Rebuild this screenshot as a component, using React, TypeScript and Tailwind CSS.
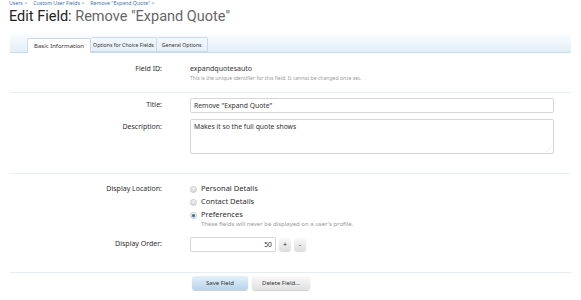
import React from "react";

const Label = ({ children }: { children: React.ReactNode }) => (
  <div className="w-[152px] shrink-0 text-right text-[7px] text-[#2d2d2d]">{children}</div>
);

function Radio({ label, checked }: { label: string; checked?: boolean }) {
  return (
    <div className="flex items-center gap-[4px] h-[12px]">
      <span className="w-[7px] h-[7px] rounded-full border border-[#c8c8c8] bg-gradient-to-b from-[#f6f6f6] to-[#d8d8d8] flex items-center justify-center">
        {checked && <span className="w-[3px] h-[3px] rounded-full bg-[#2f6a9a]" />}
      </span>
      <span className="text-[7.5px] text-[#2d2d2d]">{label}</span>
    </div>
  );
}

export default function App() {
  return (
    <div className="w-[581px] h-[300px] overflow-hidden bg-white text-[#333]" style={{ fontFamily: '"Noto Sans", "DejaVu Sans", sans-serif' }}>
      {/* Breadcrumb */}
      <div className="pl-[9px] h-[6px] text-[5.2px] leading-[6px] text-[#3b73af] whitespace-nowrap flex gap-[6px]">
        <span>Users &gt;</span>
        <span>Custom User Fields &gt;</span>
        <span>Remove "Expand Quote" &gt;</span>
      </div>

      {/* Heading */}
      <h1 className="pl-[9px] h-[22px] text-[14.5px] leading-[22px] whitespace-nowrap" style={{ fontFamily: 'Roboto, "Noto Sans", sans-serif' }}>
        <span className="text-[#222]">Edit Field:</span> <span className="text-[#666]">Remove "Expand Quote"</span>
      </h1>

      {/* Tabs */}
      <div className="mx-[10px] mt-[3px] h-[22px] bg-gradient-to-b from-white to-[#e2eef8] border-b border-[#c8daec] flex items-end pl-[17px]">
        <div className="h-[15px] px-[6px] bg-white border border-b-0 border-[#c8daec] rounded-t-[2px] text-[6px] leading-[14px] -mb-px relative">Basic Information</div>
        <div className="h-[15px] px-[2px] bg-gradient-to-b from-[#f4f8fc] to-[#e6eff8] border border-l-0 border-[#c8daec] rounded-t-[2px] text-[5.2px] leading-[14px]">Options for Choice Fields</div>
        <div className="h-[15px] px-[5px] bg-gradient-to-b from-[#f4f8fc] to-[#e6eff8] border border-l-0 border-[#c8daec] rounded-t-[2px] text-[5.2px] leading-[14px]">General Options</div>
      </div>

      {/* Field ID */}
      <div className="mx-[10px] pt-[11px] h-[40px] border-b border-[#e6eef5]">
        <div className="flex items-start">
          <Label>Field ID:</Label>
          <div className="ml-[28px]">
            <div className="text-[7px] leading-[10px] text-[#333]">expandquotesauto</div>
            <div className="text-[5.1px] leading-[8px] text-[#999]">This is the unique identifier for this field. It cannot be changed once set.</div>
          </div>
        </div>
      </div>

      {/* Title / Description */}
      <div className="mx-[10px] pt-[5px] h-[81px] border-b border-[#e6eef5] flex flex-col gap-[6px]">
        <div className="flex items-center">
          <Label>Title:</Label>
          <div className="ml-[28px] w-[364px] h-[15px] border border-[#d6d6d6] rounded-[2px] bg-white text-[6.8px] leading-[13px] pl-[3px]">
            Remove "Expand Quote"
          </div>
        </div>
        <div className="flex items-start">
          <div className="pt-[3px]"><Label>Description:</Label></div>
          <div className="ml-[28px] w-[364px] h-[35px] border border-[#d6d6d6] rounded-[2px] bg-white text-[6.8px] leading-[13px] pl-[3px] relative">
            Makes it so the full quote shows
            <span className="absolute right-[1px] bottom-[1px] text-[6px] leading-[6px] text-[#aaa]">⋰</span>
          </div>
        </div>
      </div>

      {/* Display location / order */}
      <div className="mx-[10px] pt-[9px] h-[99px] border-b border-[#e6eef5]">
        <div className="flex items-start">
          <div className="mt-[1px]"><Label>Display Location:</Label></div>
          <div className="ml-[28px] flex flex-col">
            <Radio label="Personal Details" />
            <div className="h-[1px]" />
            <Radio label="Contact Details" />
            <div className="h-[1px]" />
            <Radio label="Preferences" checked />
            <div className="pl-[11px] text-[6px] leading-[7px] text-[#999]">These fields will never be displayed on a user's profile.</div>
          </div>
        </div>
        <div className="flex items-center mt-[9px]">
          <Label>Display Order:</Label>
          <div className="ml-[28px] flex items-center gap-[3px]">
            <div className="w-[86px] h-[15px] border border-[#d6d6d6] rounded-[2px] bg-white text-[6.8px] leading-[13px] text-right pr-[3px]">50</div>
            <div className="w-[12px] h-[13px] rounded-[3px] bg-gradient-to-b from-[#f8f8f8] to-[#dedede] shadow-[0_1px_1px_rgba(0,0,0,0.15)] text-[7px] leading-[13px] text-center">+</div>
            <div className="w-[12px] h-[13px] rounded-[3px] bg-gradient-to-b from-[#f8f8f8] to-[#dedede] shadow-[0_1px_1px_rgba(0,0,0,0.15)] text-[7px] leading-[13px] text-center">-</div>
          </div>
        </div>
      </div>

      {/* Buttons */}
      <div className="flex gap-[4px] pl-[192px] pt-[3px]">
        <div className="w-[56px] h-[14px] rounded-[3px] bg-gradient-to-b from-[#e4f0f9] to-[#b7d3ea] shadow-[0_1px_1px_rgba(0,0,0,0.2)] text-[6px] leading-[14px] text-center text-[#333]">Save Field</div>
        <div className="w-[58px] h-[14px] rounded-[3px] bg-gradient-to-b from-[#fafafa] to-[#e0e0e0] shadow-[0_1px_1px_rgba(0,0,0,0.2)] text-[6px] leading-[14px] text-center text-[#333]">Delete Field...</div>
      </div>
    </div>
  );
}
